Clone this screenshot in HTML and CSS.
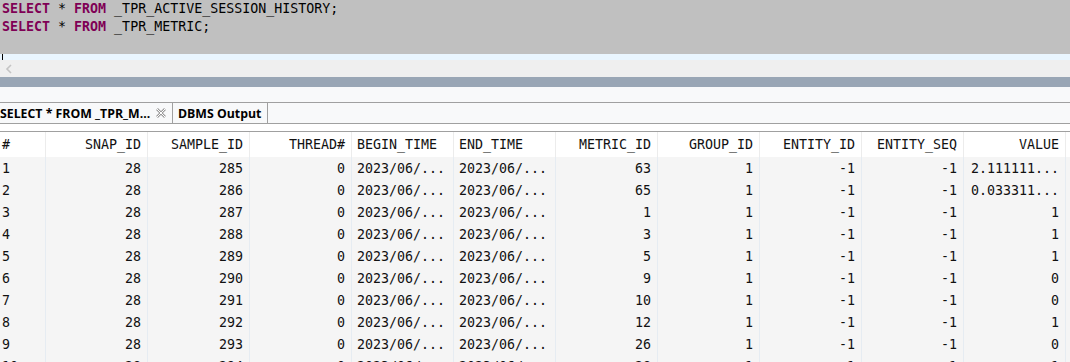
FILE: index.html
```html
<!DOCTYPE html>
<html>
<head>
<meta charset="utf-8">
<link rel="stylesheet" href="styles.css">
</head>
<body>
<div class="editor">
  <div class="code"><span class="kw">SELECT</span> * <span class="kw">FROM</span> _TPR_ACTIVE_SESSION_HISTORY;</div>
  <div class="code"><span class="kw">SELECT</span> * <span class="kw">FROM</span> _TPR_METRIC;</div>
</div>
<div class="curline"><span class="caret"></span></div>
<div class="hscroll"><svg class="arrow" width="8" height="10" viewBox="0 0 8 10"><path d="M6 1 L2 5 L6 9" fill="none" stroke="#c4c4c4" stroke-width="1.6"/></svg></div>
<div class="splitter"></div>
<div class="gap"></div>
<div class="tabs">
  <div class="tab active"><span>SELECT * FROM _TPR_M...</span>
    <svg class="close" width="10" height="10" viewBox="0 0 10 10"><path d="M1 1 L9 9 M9 1 L1 9" stroke="#9a9a9a" stroke-width="2.6"/><path d="M1 1 L9 9 M9 1 L1 9" stroke="#ffffff" stroke-width="1"/></svg>
  </div>
  <div class="tab">DBMS Output</div>
</div>
<div class="gap2"></div>
<div class="grid">
  <div class="row head">
    <div class="c first left">#</div><div class="c">SNAP_ID</div><div class="c">SAMPLE_ID</div><div class="c">THREAD#</div><div class="c left">BEGIN_TIME</div><div class="c left">END_TIME</div><div class="c">METRIC_ID</div><div class="c">GROUP_ID</div><div class="c">ENTITY_ID</div><div class="c">ENTITY_SEQ</div><div class="c">VALUE</div>
  </div>
  <div class="row"><div class="c first left">1</div><div class="c">28</div><div class="c">285</div><div class="c">0</div><div class="c left">2023/06/...</div><div class="c left">2023/06/...</div><div class="c">63</div><div class="c">1</div><div class="c">-1</div><div class="c">-1</div><div class="c">2.111111...</div></div>
  <div class="row"><div class="c first left">2</div><div class="c">28</div><div class="c">286</div><div class="c">0</div><div class="c left">2023/06/...</div><div class="c left">2023/06/...</div><div class="c">65</div><div class="c">1</div><div class="c">-1</div><div class="c">-1</div><div class="c">0.033311...</div></div>
  <div class="row"><div class="c first left">3</div><div class="c">28</div><div class="c">287</div><div class="c">0</div><div class="c left">2023/06/...</div><div class="c left">2023/06/...</div><div class="c">1</div><div class="c">1</div><div class="c">-1</div><div class="c">-1</div><div class="c">1</div></div>
  <div class="row"><div class="c first left">4</div><div class="c">28</div><div class="c">288</div><div class="c">0</div><div class="c left">2023/06/...</div><div class="c left">2023/06/...</div><div class="c">3</div><div class="c">1</div><div class="c">-1</div><div class="c">-1</div><div class="c">1</div></div>
  <div class="row"><div class="c first left">5</div><div class="c">28</div><div class="c">289</div><div class="c">0</div><div class="c left">2023/06/...</div><div class="c left">2023/06/...</div><div class="c">5</div><div class="c">1</div><div class="c">-1</div><div class="c">-1</div><div class="c">1</div></div>
  <div class="row"><div class="c first left">6</div><div class="c">28</div><div class="c">290</div><div class="c">0</div><div class="c left">2023/06/...</div><div class="c left">2023/06/...</div><div class="c">9</div><div class="c">1</div><div class="c">-1</div><div class="c">-1</div><div class="c">0</div></div>
  <div class="row"><div class="c first left">7</div><div class="c">28</div><div class="c">291</div><div class="c">0</div><div class="c left">2023/06/...</div><div class="c left">2023/06/...</div><div class="c">10</div><div class="c">1</div><div class="c">-1</div><div class="c">-1</div><div class="c">0</div></div>
  <div class="row"><div class="c first left">8</div><div class="c">28</div><div class="c">292</div><div class="c">0</div><div class="c left">2023/06/...</div><div class="c left">2023/06/...</div><div class="c">12</div><div class="c">1</div><div class="c">-1</div><div class="c">-1</div><div class="c">1</div></div>
  <div class="row"><div class="c first left">9</div><div class="c">28</div><div class="c">293</div><div class="c">0</div><div class="c left">2023/06/...</div><div class="c left">2023/06/...</div><div class="c">26</div><div class="c">1</div><div class="c">-1</div><div class="c">-1</div><div class="c">0</div></div>
  <div class="row"><div class="c first left">10</div><div class="c">28</div><div class="c">294</div><div class="c">0</div><div class="c left">2023/06/...</div><div class="c left">2023/06/...</div><div class="c">28</div><div class="c">1</div><div class="c">-1</div><div class="c">-1</div><div class="c">1</div></div>
</div>
</body>
</html>
```

FILE: styles.css
```css
html, body {
  margin: 0;
  padding: 0;
  background: #ffffff;
  overflow: hidden;
}
body {
  width: 1070px;
  height: 362px;
}
.editor {
  height: 54px;
  background: #c0c0c0;
  padding: 0 0 0 2px;
  box-sizing: border-box;
  font-family: "DejaVu Sans Mono", monospace;
  font-size: 13.3px;
  line-height: 18px;
  color: #000;
}
.code {
  height: 18px;
  white-space: pre;
}
.kw {
  color: #7f0055;
  font-weight: bold;
}
.curline {
  height: 6px;
  background: #e9f5fe;
  display: flex;
}
.caret {
  width: 1px;
  height: 6px;
  margin-left: 2px;
  background: #000;
}
.hscroll {
  height: 17px;
  background: #efefef;
  display: flex;
  align-items: center;
  padding-left: 5px;
}
.arrow {
  display: block;
}
.splitter {
  height: 10px;
  background: #99a6b5;
}
.gap {
  height: 15px;
  background: #f8f9fa;
  border-bottom: 1px solid #a0a0a0;
}
.tabs {
  height: 20px;
  background: #f8f9fa;
  border-bottom: 1px solid #a0a0a0;
  display: flex;
  font-family: "Open Sans", "Noto Sans", sans-serif;
  font-weight: bold;
  font-size: 12.3px;
  color: #000;
}
.tab {
  display: flex;
  align-items: center;
  padding: 0 6px 0 5px;
  border-right: 1px solid #a0a0a0;
  white-space: nowrap;
}
.tab.active {
  padding-left: 0;
  width: 173px;
  box-sizing: border-box;
  background: #f8f9fa;
  justify-content: space-between;
  padding-right: 6px;
}
.close {
  display: block;
}
.gap2 {
  height: 7px;
  background: #ffffff;
  border-bottom: 1px solid #a0a0a0;
}
.grid {
  font-family: "DejaVu Sans Mono", monospace;
  font-size: 13.3px;
  color: #111;
}
.row {
  display: flex;
  height: 22px;
  background: #f5f5f5;
}
.row.head {
  height: 25px;
  background: #ffffff;
}
.c {
  width: 102px;
  box-sizing: border-box;
  border-right: 1px solid #e6ecf2;
  padding: 0 6px 0 5px;
  display: flex;
  align-items: center;
  justify-content: flex-end;
  white-space: nowrap;
  overflow: hidden;
}
.head .c {
  border-right-color: #ececec;
}
.c.left {
  justify-content: flex-start;
}
.c.first {
  width: 46px;
  padding-left: 2px;
}
```
